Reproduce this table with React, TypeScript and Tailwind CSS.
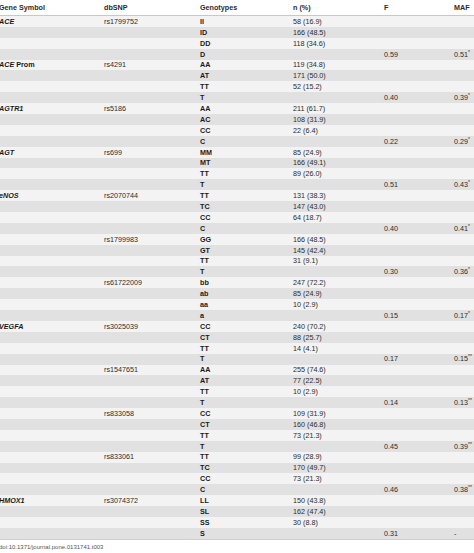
import React from 'react'

type Row = { gene?: string; geneExtra?: string; snp?: string; geno: string; n?: string; f?: string; maf?: string; sup?: string }

// each SNP block: 3 genotypes + minor allele row
const blocks: { gene?: string; geneExtra?: string; snp: string; g: [string, string][]; allele: string; f: string; maf: string; sup: string }[] = [
  { gene: 'ACE', snp: 'rs1799752', g: [['II', '58 (16.9)'], ['ID', '166 (48.5)'], ['DD', '118 (34.6)']], allele: 'D', f: '0.59', maf: '0.51', sup: '*' },
  { gene: 'ACE', geneExtra: ' Prom', snp: 'rs4291', g: [['AA', '119 (34.8)'], ['AT', '171 (50.0)'], ['TT', '52 (15.2)']], allele: 'T', f: '0.40', maf: '0.39', sup: '*' },
  { gene: 'AGTR1', snp: 'rs5186', g: [['AA', '211 (61.7)'], ['AC', '108 (31.9)'], ['CC', '22 (6.4)']], allele: 'C', f: '0.22', maf: '0.29', sup: '*' },
  { gene: 'AGT', snp: 'rs699', g: [['MM', '85 (24.9)'], ['MT', '166 (49.1)'], ['TT', '89 (26.0)']], allele: 'T', f: '0.51', maf: '0.43', sup: '*' },
  { gene: 'eNOS', snp: 'rs2070744', g: [['TT', '131 (38.3)'], ['TC', '147 (43.0)'], ['CC', '64 (18.7)']], allele: 'C', f: '0.40', maf: '0.41', sup: '*' },
  { snp: 'rs1799983', g: [['GG', '166 (48.5)'], ['GT', '145 (42.4)'], ['TT', '31 (9.1)']], allele: 'T', f: '0.30', maf: '0.36', sup: '*' },
  { snp: 'rs61722009', g: [['bb', '247 (72.2)'], ['ab', '85 (24.9)'], ['aa', '10 (2.9)']], allele: 'a', f: '0.15', maf: '0.17', sup: '*' },
  { gene: 'VEGFA', snp: 'rs3025039', g: [['CC', '240 (70.2)'], ['CT', '88 (25.7)'], ['TT', '14 (4.1)']], allele: 'T', f: '0.17', maf: '0.15', sup: '**' },
  { snp: 'rs1547651', g: [['AA', '255 (74.6)'], ['AT', '77 (22.5)'], ['TT', '10 (2.9)']], allele: 'T', f: '0.14', maf: '0.13', sup: '**' },
  { snp: 'rs833058', g: [['CC', '109 (31.9)'], ['CT', '160 (46.8)'], ['TT', '73 (21.3)']], allele: 'T', f: '0.45', maf: '0.39', sup: '**' },
  { snp: 'rs833061', g: [['TT', '99 (28.9)'], ['TC', '170 (49.7)'], ['CC', '73 (21.3)']], allele: 'C', f: '0.46', maf: '0.38', sup: '**' },
  { gene: 'HMOX1', snp: 'rs3074372', g: [['LL', '150 (43.8)'], ['SL', '162 (47.4)'], ['SS', '30 (8.8)']], allele: 'S', f: '0.31', maf: '-', sup: '' },
]

const rows: Row[] = blocks.flatMap((b) => [
  { gene: b.gene, geneExtra: b.geneExtra, snp: b.snp, geno: b.g[0][0], n: b.g[0][1] },
  { geno: b.g[1][0], n: b.g[1][1] },
  { geno: b.g[2][0], n: b.g[2][1] },
  { geno: b.allele, f: b.f, maf: b.maf, sup: b.sup },
])

const cols = 'grid grid-cols-[104px_96px_93px_91px_70px_20px]'

export default function App() {
  return (
    <div className="w-[474px] h-[553px] overflow-hidden bg-white text-[7.2px] leading-none text-[#2b2b2b]" style={{ fontFamily: '"Liberation Sans", Arial, sans-serif' }}>
      <div className={`${cols} h-[16px] items-center border-b border-[#c8c8c8] font-bold text-[#2b2b2b] whitespace-nowrap`}>
        <div className="-ml-[1px]">Gene Symbol</div>
        <div>dbSNP</div>
        <div>Genotypes</div>
        <div>n (%)</div>
        <div>F</div>
        <div>MAF</div>
      </div>
      {rows.map((r, i) => (
        <div key={i} className={`${cols} h-[10.9px] items-center ${i % 2 === 0 ? 'bg-[#f3f3f3]' : 'bg-[#e1e1e1]'}`}>
          <div className="-ml-[1px] font-bold text-[#1a1a1a] whitespace-nowrap">
            {r.gene && <span className="italic">{r.gene}</span>}
            {r.geneExtra}
          </div>
          <div>{r.snp}</div>
          <div className="font-bold text-[#1a1a1a]">{r.geno}</div>
          <div className="whitespace-nowrap">{r.n}</div>
          <div>{r.f}</div>
          <div className="flex items-start whitespace-nowrap">
            <span>{r.maf}</span>
            {r.sup && <span className="text-[5px] leading-none -mt-[1px]">{r.sup}</span>}
          </div>
        </div>
      ))}
      <div className="border-t border-[#d0d0d0] pt-[4px] text-[6px] text-[#555] -ml-[1px]">doi:10.1371/journal.pone.0131741.t003</div>
    </div>
  )
}
